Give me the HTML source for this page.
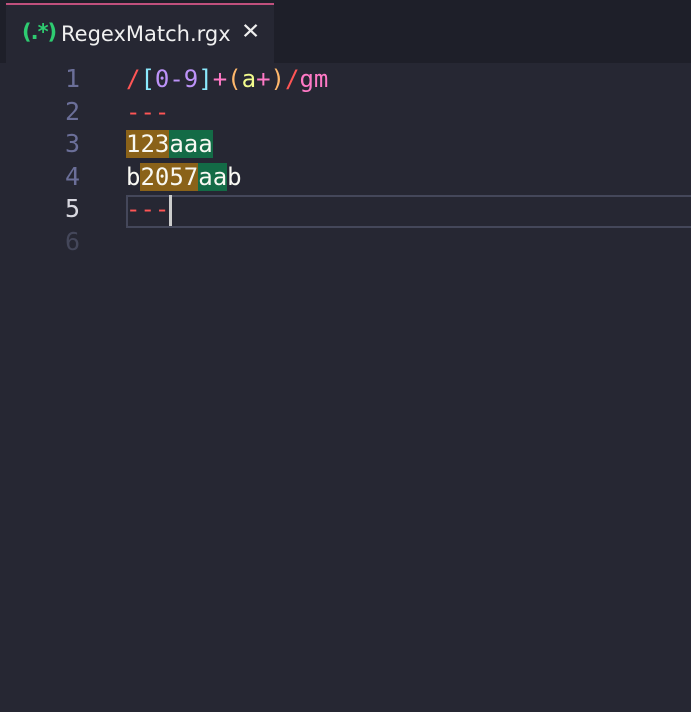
<!DOCTYPE html>
<html><head><style>
body{margin:0;width:691px;height:712px;background:#262733;overflow:hidden;position:relative;font-family:"DejaVu Sans Mono","Liberation Mono",monospace}
.bar{position:absolute;left:0;top:0;width:691px;height:63px;background:#1e1f29}
.tab{position:absolute;left:6px;top:3px;width:268px;height:60px;background:#262733;border-top:2px solid #c0507d;box-sizing:border-box}
.tab .ic{position:absolute;left:16px;top:15px;color:#2ecc71;font:bold 21px "DejaVu Sans",sans-serif;letter-spacing:-1px}
.tab .nm{position:absolute;left:55px;top:17px;color:#f0f0f0;font:21px "DejaVu Sans","Liberation Sans",sans-serif}
.tab .x{position:absolute;left:235px;top:14px;color:#eee;font:23px "DejaVu Sans",sans-serif;transform:scaleY(0.95)}
.ln{position:absolute;left:40px;width:40px;text-align:right;font-size:25px;color:#6b6f99;line-height:32.5px}
.code{position:absolute;left:126px;font-size:24px;line-height:32.5px;color:#f8f8f2;white-space:pre}
.cur{position:absolute;left:126px;top:195px;width:565px;height:33px;border:2px solid #44475a;border-right:none;box-sizing:border-box}
.o{background:#8a6219}.g{background:#136b46}
</style></head><body>
<div class="bar"></div>
<div class="tab"><span class="ic">(.*)</span><span class="nm">RegexMatch.rgx</span><span class="x">✕</span></div>
<div class="cur"></div>
<div class="ln" style="top:63px">1</div>
<div class="ln" style="top:95.5px">2</div>
<div class="ln" style="top:128px">3</div>
<div class="ln" style="top:160.5px">4</div>
<div class="ln" style="top:193px;color:#d8d8e0">5</div>
<div class="ln" style="top:225.5px;color:#44475a">6</div>
<div class="code" style="top:63px"><span style="color:#ff5555">/</span><span style="color:#8be9fd">[</span><span style="color:#bd93f9">0-9</span><span style="color:#8be9fd">]</span><span style="color:#ff79c6">+</span><span style="color:#ffb86c">(</span><span style="color:#f1fa8c">a</span><span style="color:#ff79c6">+</span><span style="color:#ffb86c">)</span><span style="color:#ff5555">/</span><span style="color:#ff79c6">gm</span></div>
<div class="code" style="top:95.5px;color:#ff5555">---</div>
<div class="code" style="top:128px"><span class="o">123</span><span class="g">aaa</span></div>
<div class="code" style="top:160.5px">b<span class="o">2057</span><span class="g">aa</span>b</div>
<div class="code" style="top:193px;color:#ff5555">---<span style="display:inline-block;width:3px;height:31px;background:#ccc;vertical-align:middle"></span></div>
</body></html>
